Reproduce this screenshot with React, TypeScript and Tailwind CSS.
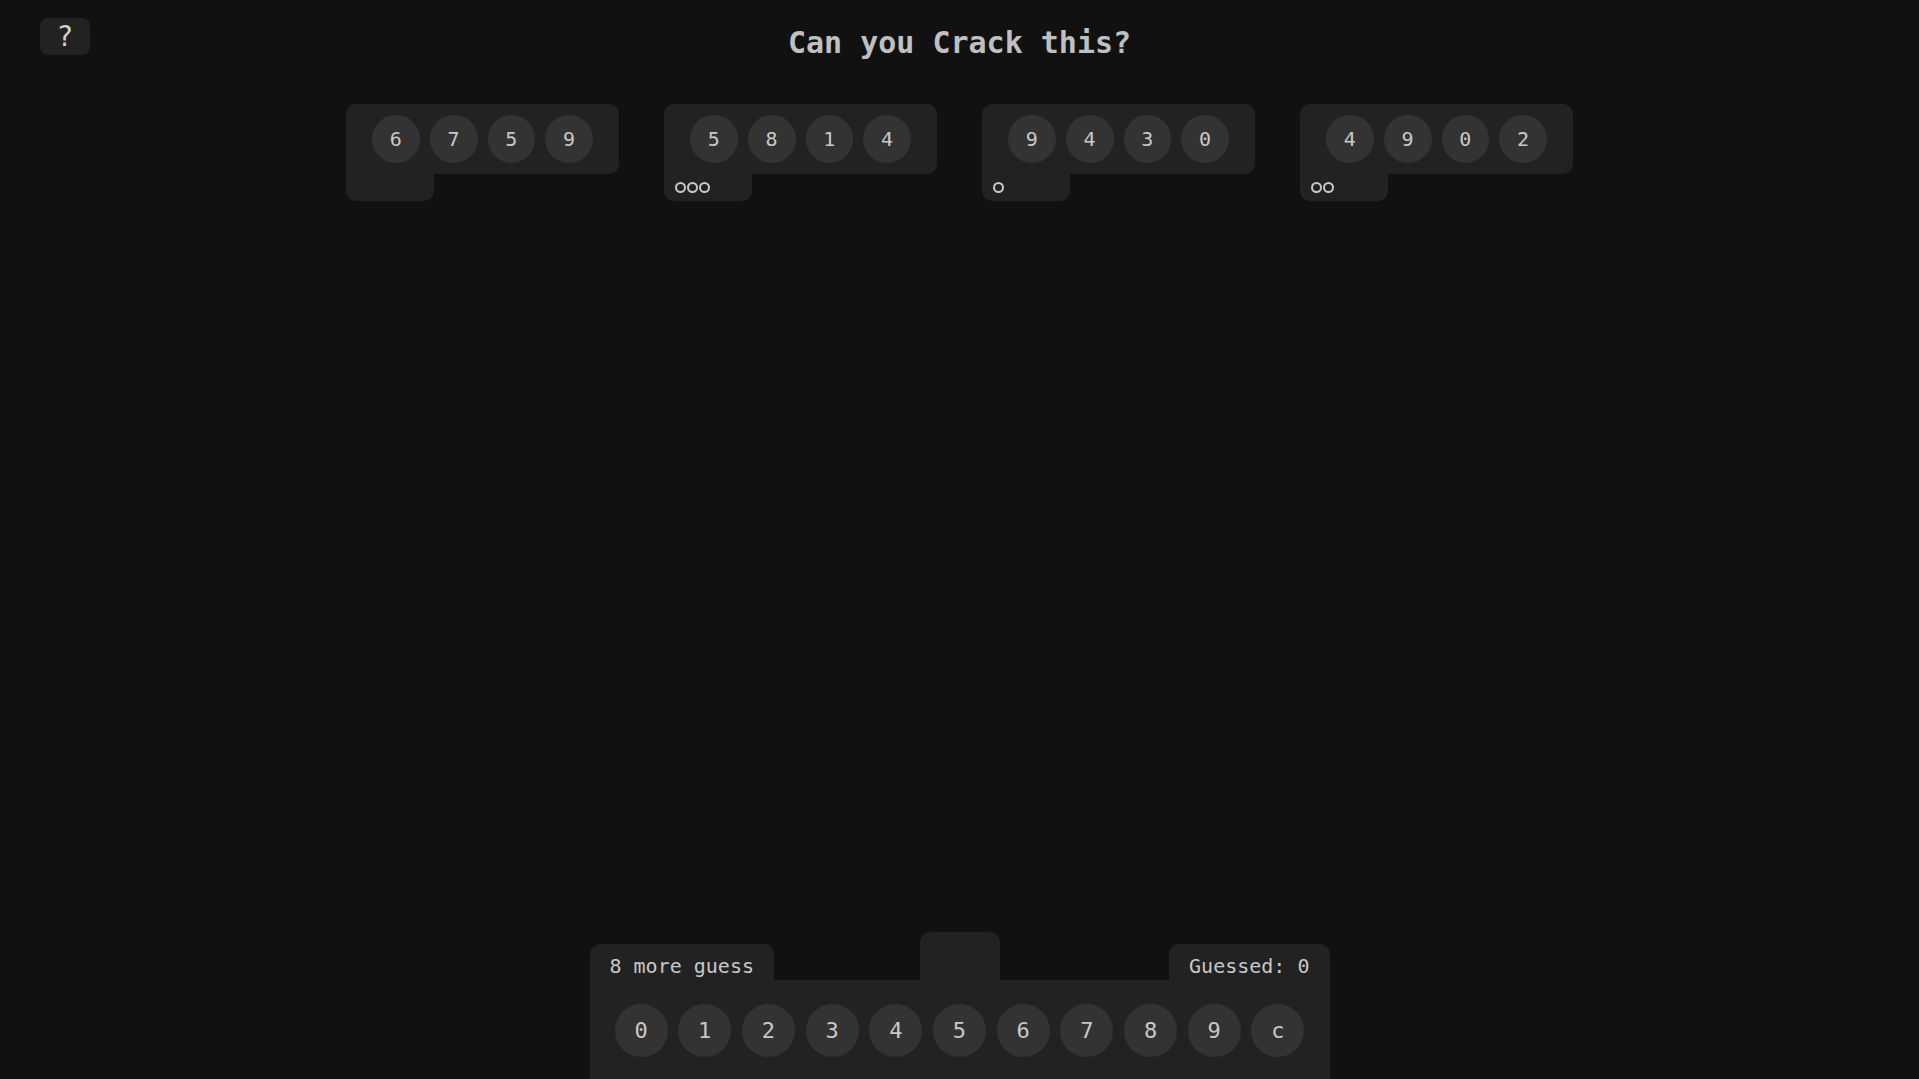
import React from "react";

const mono = { fontFamily: '"DejaVu Sans Mono", "Liberation Mono", monospace' };

const guesses = [
  { digits: [6, 7, 5, 9], hits: 0 },
  { digits: [5, 8, 1, 4], hits: 3 },
  { digits: [9, 4, 3, 0], hits: 1 },
  { digits: [4, 9, 0, 2], hits: 2 },
];

const keys = ["0", "1", "2", "3", "4", "5", "6", "7", "8", "9", "c"];

function GuessCard({ digits, hits }: { digits: number[]; hits: number }) {
  return (
    <div className="flex flex-col w-[273px]">
      <div className="flex items-center gap-[10px] px-[26px] py-[11px] bg-[#222222] rounded-[10px] rounded-bl-none">
        {digits.map((d, i) => (
          <div
            key={i}
            className="flex items-center justify-center w-12 h-12 rounded-full bg-[#333333] text-[20px] text-[#c8c8c8]"
          >
            {d}
          </div>
        ))}
      </div>
      {/* hint tab */}
      <div className="flex items-center gap-[1px] w-[88px] h-[27px] pl-[11px] bg-[#222222] rounded-b-[10px]">
        {Array.from({ length: hits }).map((_, i) => (
          <span key={i} className="block w-[11px] h-[11px] rounded-full border-2 border-[#c8c8c8]" />
        ))}
      </div>
    </div>
  );
}

export default function App() {
  return (
    <div className="h-screen overflow-hidden flex flex-col bg-[#111111] text-[#c8c8c8]" style={mono}>
      {/* Header */}
      <div className="grid grid-cols-[1fr_auto_1fr]">
        <div className="justify-self-start pl-[40px] pt-[18px]">
          <button className="flex items-center justify-center w-[50px] h-[37px] rounded-[8px] bg-[#222222] text-[28px] leading-none text-[#d0d0d0]">
            ?
          </button>
        </div>
        <h1 className="pt-[25px] text-[30px] leading-[36px] font-bold text-[#c0c0c0]">
          Can you Crack this?
        </h1>
        <div />
      </div>

      {/* Previous guesses */}
      <div className="flex justify-center gap-[45px] mt-[43px]">
        {guesses.map((g, i) => (
          <GuessCard key={i} digits={g.digits} hits={g.hits} />
        ))}
      </div>

      {/* Keypad panel */}
      <div className="mt-auto mx-auto w-[740px] flex flex-col">
        <div className="grid grid-cols-[1fr_auto_1fr] items-end">
          <div className="justify-self-start h-[36px] px-5 pt-[8px] bg-[#222222] rounded-t-[10px] text-[20px] leading-[28px] whitespace-nowrap">
            8 more guess
          </div>
          <div className="w-[80px] h-[48px] bg-[#222222] rounded-t-[10px]" />
          <div className="justify-self-end h-[36px] px-5 pt-[8px] bg-[#222222] rounded-t-[10px] text-[20px] leading-[28px] whitespace-nowrap">
            Guessed: 0
          </div>
        </div>
        <div className="flex gap-[10.7px] px-[25px] pt-6 pb-[22px] bg-[#222222]">
          {keys.map((k) => (
            <button
              key={k}
              className="flex items-center justify-center w-[53px] h-[53px] rounded-full bg-[#333333] text-[22px] text-[#c8c8c8]"
            >
              {k}
            </button>
          ))}
        </div>
      </div>
    </div>
  );
}
